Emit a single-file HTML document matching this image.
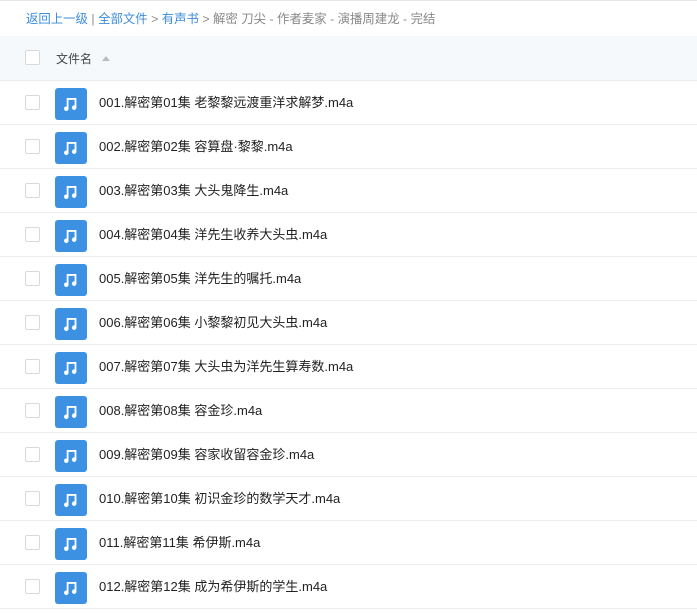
<!DOCTYPE html>
<html><head><meta charset="utf-8"><style>
body{margin:0;width:697px;height:613px;overflow:hidden;background:#fff;font-family:"Liberation Sans","Noto Sans CJK SC",sans-serif;border-top:1px solid #e4e6ea;box-sizing:border-box;position:relative}
.bc{position:absolute;left:26px;top:10px;font-size:12.4px;color:#888;line-height:16px}
.bc a{color:#3b8cd9;text-decoration:none}
.hd{position:absolute;left:0;top:35px;width:697px;height:45px;background:#f6f9fc;border-bottom:1px solid #eaecf0;box-sizing:border-box}
.cb{position:absolute;left:25px;width:15px;height:15px;border:1px solid #d6d9de;border-radius:2px;background:#fff;box-sizing:border-box}
.hd .t{position:absolute;left:56px;top:14px;font-size:12px;color:#444}
.hd .tri{position:absolute;left:102px;top:20px;width:0;height:0;border-left:4px solid transparent;border-right:4px solid transparent;border-bottom:5px solid #bbb}
.row{position:absolute;left:0;width:697px;height:44px;border-bottom:1px solid #ebedf0;box-sizing:border-box}
.ic{position:absolute;left:55px;top:7px;width:32px;height:32px;background:#3d91e2;border-radius:3px}
.ic svg{position:absolute;left:7px;top:7px}
.nm{position:absolute;left:99px;top:14px;font-size:13px;color:#222;line-height:16px}
</style></head><body>
<div class="bc"><a>返回上一级</a> | <a>全部文件</a> &gt; <a>有声书</a> &gt; 解密 刀尖 - 作者麦家 - 演播周建龙 - 完结</div>
<div class="hd"><div class="cb" style="top:14px"></div><div class="t">文件名</div><div class="tri"></div></div>
<div id="rows"></div>
<script>
var n=["001.解密第01集 老黎黎远渡重洋求解梦.m4a","002.解密第02集 容算盘·黎黎.m4a","003.解密第03集 大头鬼降生.m4a","004.解密第04集 洋先生收养大头虫.m4a","005.解密第05集 洋先生的嘱托.m4a","006.解密第06集 小黎黎初见大头虫.m4a","007.解密第07集 大头虫为洋先生算寿数.m4a","008.解密第08集 容金珍.m4a","009.解密第09集 容家收留容金珍.m4a","010.解密第10集 初识金珍的数学天才.m4a","011.解密第11集 希伊斯.m4a","012.解密第12集 成为希伊斯的学生.m4a"];
var h="";n.forEach(function(s,i){h+='<div class="row" style="top:'+(80+i*44)+'px"><div class="cb" style="top:14px"></div><div class="ic"><svg width="18" height="18" viewBox="0 0 16 16"><path d="M5 12V3.5h7V11" stroke="#fff" stroke-width="1.6" fill="none"/><circle cx="3.8" cy="12.2" r="2" fill="#fff"/><circle cx="10.8" cy="11.2" r="2" fill="#fff"/></svg></div><div class="nm">'+s+'</div></div>'});
document.getElementById("rows").innerHTML=h;
</script>
</body></html>
